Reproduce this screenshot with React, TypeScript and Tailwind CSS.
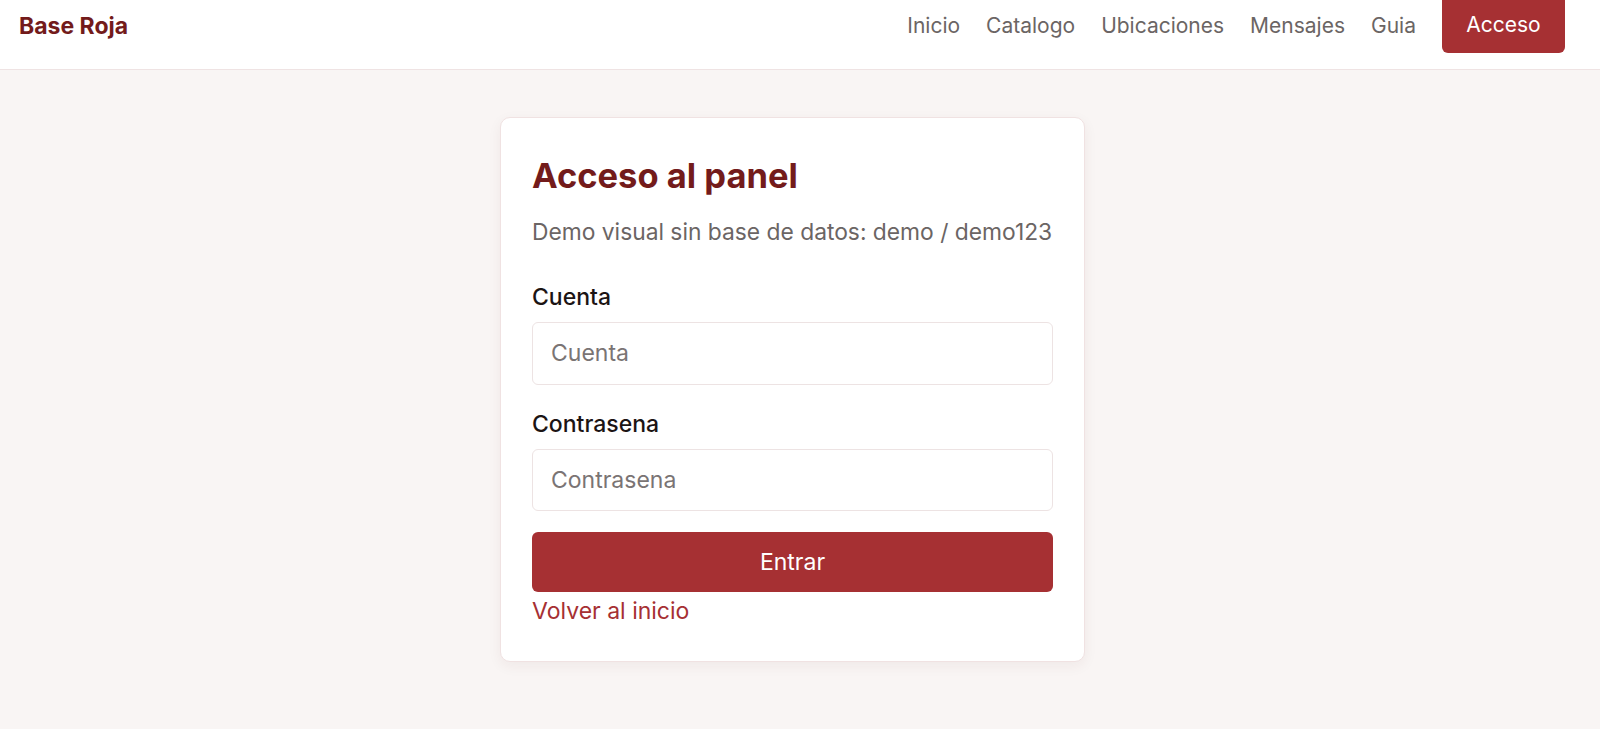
import { useState } from 'react';

const links = ['Inicio', 'Catalogo', 'Ubicaciones', 'Mensajes', 'Guia'];

export default function App() {
    const [cuenta, setCuenta] = useState('');
    const [clave, setClave] = useState('');

    return (
        <div className="min-h-screen bg-[#f9f5f4] font-['Inter','Noto_Sans',sans-serif]">
            <header className="flex h-[70px] items-start justify-between border-b border-[#efe3e3] bg-white pr-[35px] pl-[19px]">
                <a href="#" className="mt-[9px] text-[23px] font-bold text-[#731b1b]">
                    Base Roja
                </a>
                <nav className="flex items-start gap-[26px]">
                    {links.map((l) => (
                        <a key={l} href="#" className="mt-[10px] text-[21px] text-[#6b6564]">
                            {l}
                        </a>
                    ))}
                    <a
                        href="#"
                        className="flex h-[53px] w-[123px] items-center justify-center rounded-b-[6px] bg-[#a63033] pb-[4px] text-[21px] text-white"
                    >
                        Acceso
                    </a>
                </nav>
            </header>

            <main className="flex justify-center pt-[47px] pr-[15px] pb-16">
                <div className="w-[585px] rounded-[10px] border border-[#f0e2e2] bg-white px-[31px] pt-[36px] pb-[32px] shadow-[0_4px_14px_rgba(80,30,30,0.06)]">
                    <h1 className="text-[34.5px] leading-[43px] font-bold text-[#731b1b]">Acceso al panel</h1>
                    <p className="mt-[18px] text-[22.8px] whitespace-nowrap text-[#6b6564]">
                        Demo visual sin base de datos: demo / demo123
                    </p>

                    <label className="mt-[31px] block text-[23px] font-medium text-[#1c1414]">Cuenta</label>
                    <input
                        value={cuenta}
                        onChange={(e) => setCuenta(e.target.value)}
                        placeholder="Cuenta"
                        className="mt-[7px] block h-[63px] w-full rounded-[6px] border border-[#ede3e3] px-[18px] text-[23px] text-[#1c1414] outline-none placeholder:text-[#7a7474]"
                    />

                    <label className="mt-[22px] block text-[23px] font-medium text-[#1c1414]">Contrasena</label>
                    <input
                        type="password"
                        value={clave}
                        onChange={(e) => setClave(e.target.value)}
                        placeholder="Contrasena"
                        className="mt-[8px] block h-[62px] w-full rounded-[6px] border border-[#ede3e3] px-[18px] text-[23px] text-[#1c1414] outline-none placeholder:text-[#7a7474]"
                    />

                    <button className="mt-[21px] block h-[60px] w-full rounded-[6px] bg-[#a63033] text-[23px] text-white">
                        Entrar
                    </button>
                    <a href="#" className="mt-[2px] block text-[23px] text-[#a63033]">
                        Volver al inicio
                    </a>
                </div>
            </main>
        </div>
    );
}
